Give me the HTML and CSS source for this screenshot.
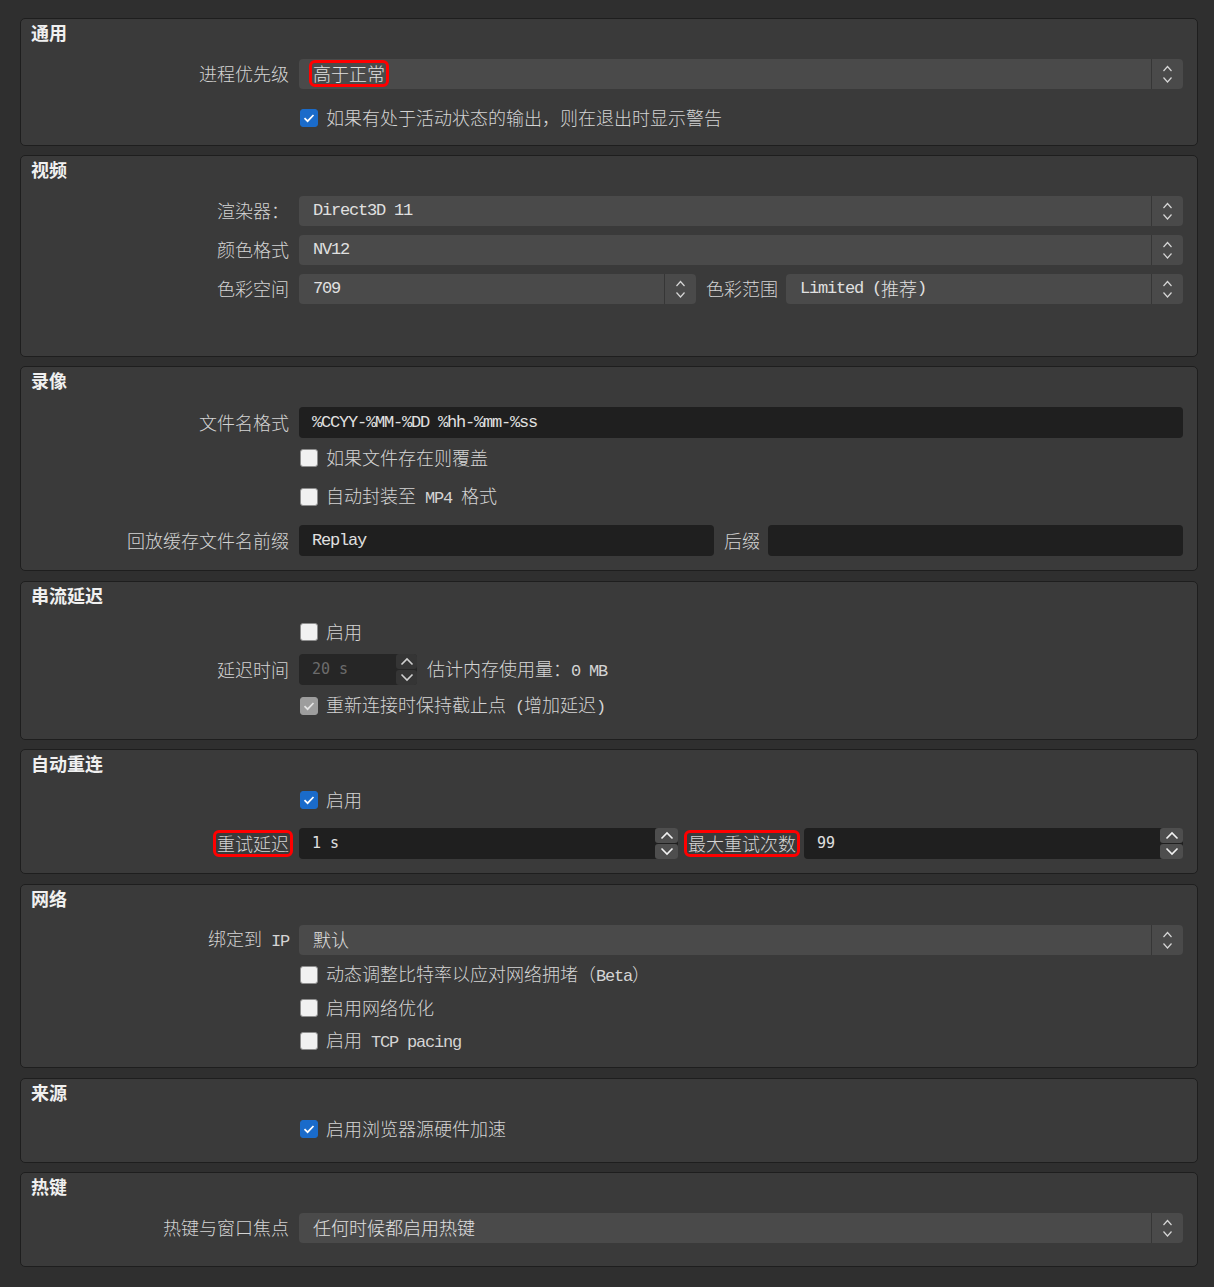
FILE: index.html
```html
<!DOCTYPE html>
<html lang="zh-CN">
<head>
  <meta charset="UTF-8">
  <meta name="viewport" content="width=device-width, initial-scale=1.0">
  <title>高级设置</title>
  <link rel="stylesheet" href="styles.css">
</head>
<body>
  <div class="settings">

    <!-- 通用 -->
    <section class="group pad-17">
      <div class="group-title">通用</div>
      <div class="row">
        <span class="row-label">进程优先级</span>
        <div class="combo">
          <span class="combo-value"><span class="mark">高于正常</span></span>
          <span class="combo-arrows"><svg width="11" height="20" viewBox="0 0 11 20"><path d="M1.5 7 5.5 2.5 9.5 7M1.5 13.5 5.5 18 9.5 13.5" fill="none" stroke="#d6d6d6" stroke-width="1.2"/></svg></span>
        </div>
      </div>
      <div class="row sp-19">
        <span class="row-label"></span>
        <span class="check on"><svg width="18" height="18" viewBox="0 0 18 18"><path d="M4.5 9.2 7.6 12.2 13.5 6" fill="none" stroke="#fff" stroke-width="1.7"/></svg></span>
        <span class="check-text">如果有处于活动状态的输出，则在退出时显示警告</span>
      </div>
    </section>

    <!-- 视频 -->
    <section class="group pad-52">
      <div class="group-title">视频</div>
      <div class="row">
        <span class="row-label">渲染器：</span>
        <div class="combo">
          <span class="combo-value"><span class="mono">Direct3D 11</span></span>
          <span class="combo-arrows"><svg width="11" height="20" viewBox="0 0 11 20"><path d="M1.5 7 5.5 2.5 9.5 7M1.5 13.5 5.5 18 9.5 13.5" fill="none" stroke="#d6d6d6" stroke-width="1.2"/></svg></span>
        </div>
      </div>
      <div class="row">
        <span class="row-label">颜色格式</span>
        <div class="combo">
          <span class="combo-value"><span class="mono">NV12</span></span>
          <span class="combo-arrows"><svg width="11" height="20" viewBox="0 0 11 20"><path d="M1.5 7 5.5 2.5 9.5 7M1.5 13.5 5.5 18 9.5 13.5" fill="none" stroke="#d6d6d6" stroke-width="1.2"/></svg></span>
        </div>
      </div>
      <div class="row">
        <span class="row-label">色彩空间</span>
        <div class="combo">
          <span class="combo-value"><span class="mono">709</span></span>
          <span class="combo-arrows"><svg width="11" height="20" viewBox="0 0 11 20"><path d="M1.5 7 5.5 2.5 9.5 7M1.5 13.5 5.5 18 9.5 13.5" fill="none" stroke="#d6d6d6" stroke-width="1.2"/></svg></span>
        </div>
        <span class="inline-label">色彩范围</span>
        <div class="combo">
          <span class="combo-value"><span class="mono">Limited (</span>推荐<span class="mono">)</span></span>
          <span class="combo-arrows"><svg width="11" height="20" viewBox="0 0 11 20"><path d="M1.5 7 5.5 2.5 9.5 7M1.5 13.5 5.5 18 9.5 13.5" fill="none" stroke="#d6d6d6" stroke-width="1.2"/></svg></span>
        </div>
      </div>
    </section>

    <!-- 录像 -->
    <section class="group pad-14">
      <div class="group-title">录像</div>
      <div class="row">
        <span class="row-label">文件名格式</span>
        <div class="field"><span class="mono">%CCYY-%MM-%DD %hh-%mm-%ss</span></div>
      </div>
      <div class="row sp-10">
        <span class="row-label"></span>
        <span class="check"></span>
        <span class="check-text">如果文件存在则覆盖</span>
      </div>
      <div class="row sp-19">
        <span class="row-label"></span>
        <span class="check"></span>
        <span class="check-text">自动封装至<span class="mono"> MP4 </span>格式</span>
      </div>
      <div class="row sp-18">
        <span class="row-label">回放缓存文件名前缀</span>
        <div class="field"><span class="mono">Replay</span></div>
        <span class="inline-label">后缀</span>
        <div class="field"></div>
      </div>
    </section>

    <!-- 串流延迟 -->
    <section class="group pad-23 wide-gap">
      <div class="group-title">串流延迟</div>
      <div class="row">
        <span class="row-label"></span>
        <span class="check"></span>
        <span class="check-text">启用</span>
      </div>
      <div class="row sp-12">
        <span class="row-label">延迟时间</span>
        <div class="spin small disabled">
          <div class="field"><span class="num">20 s</span></div>
          <div class="spin-buttons">
            <span class="spin-btn"><svg width="14" height="9" viewBox="0 0 14 9"><path d="M1.5 7.5 7 2 12.5 7.5" fill="none" stroke="#d0d0d0" stroke-width="1.6"/></svg></span>
            <span class="spin-btn"><svg width="14" height="9" viewBox="0 0 14 9"><path d="M1.5 1.5 7 7 12.5 1.5" fill="none" stroke="#d0d0d0" stroke-width="1.6"/></svg></span>
          </div>
        </div>
        <span class="note">估计内存使用量：<span class="mono">0 MB</span></span>
      </div>
      <div class="row sp-11">
        <span class="row-label"></span>
        <span class="check on disabled"><svg width="18" height="18" viewBox="0 0 18 18"><path d="M4.5 9.2 7.6 12.2 13.5 6" fill="none" stroke="#e4e4e4" stroke-width="1.7"/></svg></span>
        <span class="check-text">重新连接时保持截止点<span class="mono"> (</span>增加延迟<span class="mono">)</span></span>
      </div>
    </section>

    <!-- 自动重连 -->
    <section class="group pad-14">
      <div class="group-title">自动重连</div>
      <div class="row">
        <span class="row-label"></span>
        <span class="check on"><svg width="18" height="18" viewBox="0 0 18 18"><path d="M4.5 9.2 7.6 12.2 13.5 6" fill="none" stroke="#fff" stroke-width="1.7"/></svg></span>
        <span class="check-text">启用</span>
      </div>
      <div class="row sp-18">
        <span class="row-label"><span class="mark">重试延迟</span></span>
        <div class="spin">
          <div class="field"><span class="num">1 s</span></div>
          <div class="spin-buttons">
            <span class="spin-btn"><svg width="14" height="9" viewBox="0 0 14 9"><path d="M1.5 7.5 7 2 12.5 7.5" fill="none" stroke="#f2f2f2" stroke-width="1.6"/></svg></span>
            <span class="spin-btn"><svg width="14" height="9" viewBox="0 0 14 9"><path d="M1.5 1.5 7 7 12.5 1.5" fill="none" stroke="#f2f2f2" stroke-width="1.6"/></svg></span>
          </div>
        </div>
        <span class="inline-label"><span class="mark">最大重试次数</span></span>
        <div class="spin">
          <div class="field"><span class="num">99</span></div>
          <div class="spin-buttons">
            <span class="spin-btn"><svg width="14" height="9" viewBox="0 0 14 9"><path d="M1.5 7.5 7 2 12.5 7.5" fill="none" stroke="#f2f2f2" stroke-width="1.6"/></svg></span>
            <span class="spin-btn"><svg width="14" height="9" viewBox="0 0 14 9"><path d="M1.5 1.5 7 7 12.5 1.5" fill="none" stroke="#f2f2f2" stroke-width="1.6"/></svg></span>
          </div>
        </div>
      </div>
    </section>

    <!-- 网络 -->
    <section class="group pad-16 wide-gap">
      <div class="group-title">网络</div>
      <div class="row">
        <span class="row-label">绑定到<span class="mono"> IP</span></span>
        <div class="combo">
          <span class="combo-value">默认</span>
          <span class="combo-arrows"><svg width="11" height="20" viewBox="0 0 11 20"><path d="M1.5 7 5.5 2.5 9.5 7M1.5 13.5 5.5 18 9.5 13.5" fill="none" stroke="#d6d6d6" stroke-width="1.2"/></svg></span>
        </div>
      </div>
      <div class="row sp-10">
        <span class="row-label"></span>
        <span class="check"></span>
        <span class="check-text">动态调整比特率以应对网络拥堵（<span class="mono">Beta</span>）</span>
      </div>
      <div class="row sp-13">
        <span class="row-label"></span>
        <span class="check"></span>
        <span class="check-text">启用网络优化</span>
      </div>
      <div class="row sp-13">
        <span class="row-label"></span>
        <span class="check"></span>
        <span class="check-text">启用<span class="mono"> TCP pacing</span></span>
      </div>
    </section>

    <!-- 来源 -->
    <section class="group pad-23 wide-gap">
      <div class="group-title">来源</div>
      <div class="row">
        <span class="row-label"></span>
        <span class="check on"><svg width="18" height="18" viewBox="0 0 18 18"><path d="M4.5 9.2 7.6 12.2 13.5 6" fill="none" stroke="#fff" stroke-width="1.7"/></svg></span>
        <span class="check-text">启用浏览器源硬件加速</span>
      </div>
    </section>

    <!-- 热键 -->
    <section class="group pad-23">
      <div class="group-title">热键</div>
      <div class="row">
        <span class="row-label">热键与窗口焦点</span>
        <div class="combo">
          <span class="combo-value">任何时候都启用热键</span>
          <span class="combo-arrows"><svg width="11" height="20" viewBox="0 0 11 20"><path d="M1.5 7 5.5 2.5 9.5 7M1.5 13.5 5.5 18 9.5 13.5" fill="none" stroke="#d6d6d6" stroke-width="1.2"/></svg></span>
        </div>
      </div>
    </section>

  </div>
</body>
</html>
```

FILE: styles.css
```css
body {
  margin: 0;
  background: #2f2f2f;
  color: #d4d4d4;
  font-family: "Noto Sans CJK SC", "Noto Sans", sans-serif;
  font-size: 18px;
  font-weight: 300;
}

.settings {
  display: flex;
  flex-direction: column;
  gap: 9px;
  padding: 18px 16px 20px 20px;
}

/* group boxes */
.group {
  background: #3a3a3a;
  border: 1px solid #1e1e1e;
  border-radius: 5px;
  padding: 2px 14px 16px 10px;
}

.group.wide-gap { margin-top: 1px; }

.pad-14 { padding-bottom: 14px; }
.pad-16 { padding-bottom: 16px; }
.pad-17 { padding-bottom: 17px; }
.pad-23 { padding-bottom: 23px; }
.pad-52 { padding-bottom: 52px; }

.group-title {
  font-weight: 700;
  height: 22px;
  line-height: 22px;
  color: #f0f0f0;
  margin-bottom: 16px;
}

/* form rows */
.row {
  display: flex;
  align-items: center;
  height: 20px;
  margin-top: 9px;
}

.row:has(.combo) { height: 30px; }
.row:has(.field) { height: 31px; }

.group-title + .row { margin-top: 0; }

.sp-10 { margin-top: 10px; }
.sp-11 { margin-top: 11px; }
.sp-12 { margin-top: 12px; }
.sp-13 { margin-top: 13px; }
.sp-18 { margin-top: 18px; }
.sp-19 { margin-top: 19px; }

/* Noto CJK sits a little low in its line box; lift the text by 1px */
.row-label,
.inline-label,
.check-text,
.note,
.combo-value {
  padding-bottom: 2px;
}

.row-label {
  flex: none;
  width: 258px;
  margin-right: 10px;
  text-align: right;
  line-height: 20px;
  white-space: nowrap;
}

.inline-label {
  flex: none;
  margin: 0 8px 0 10px;
  line-height: 20px;
  white-space: nowrap;
}

.mono {
  font-family: "Liberation Mono", monospace;
  font-size: 17px;
  font-weight: 400;
  letter-spacing: -1.2px;
  line-height: 1;
}

.num {
  font-family: "DejaVu Sans Mono", monospace;
  font-size: 15px;
  font-weight: 400;
  line-height: 1;
}

/* red annotation boxes */
.mark {
  display: inline-block;
  line-height: 19px;
  outline: 3px solid #ff0000;
  outline-offset: 1px;
  border-radius: 2px;
}

/* combo boxes */
.combo {
  flex: 1;
  display: flex;
  height: 30px;
  background: #4a4a4a;
  border-radius: 4px;
  color: #e0e0e0;
}

.combo-value {
  flex: 1;
  display: flex;
  align-items: center;
  padding-left: 14px;
  white-space: nowrap;
}

.combo-arrows {
  flex: none;
  width: 31px;
  display: flex;
  align-items: center;
  justify-content: center;
  border-left: 1px solid #363636;
}

/* line edits */
.field {
  flex: 1;
  display: flex;
  align-items: center;
  height: 31px;
  padding-left: 13px;
  background: #1f1f1f;
  border-radius: 4px;
  color: #e0e0e0;
  white-space: nowrap;
}

/* spin boxes */
.spin {
  flex: 1;
  display: flex;
  height: 31px;
}

.spin .field {
  border-radius: 4px 0 0 4px;
}

.spin-buttons {
  flex: none;
  width: 23px;
  display: flex;
  flex-direction: column;
  gap: 1px;
  background: #1f1f1f;
  border-radius: 0 4px 4px 0;
}

.spin-btn {
  flex: 1;
  display: flex;
  align-items: center;
  justify-content: center;
  background: #4e4e4e;
  border-radius: 3px;
}

.spin.small {
  flex: none;
  width: 118px;
}

.spin.small .spin-buttons { width: 21px; }

.spin.disabled .field {
  background: #262626;
  color: #6c6c6c;
}

.spin.disabled .spin-buttons { background: #262626; }
.spin.disabled .spin-btn { background: #353535; }

.note {
  margin-left: 10px;
  line-height: 20px;
  white-space: nowrap;
}

/* checkboxes */
.check {
  flex: none;
  box-sizing: border-box;
  width: 18px;
  height: 18px;
  margin: 0 8px 0 1px;
  background: #f1f1f1;
  border: 1px solid #8e8e8e;
  border-radius: 3px;
  display: flex;
}

.check svg {
  margin: -1px;
}

.check.on {
  background: #1a6bca;
  border-color: #1a6bca;
}

.check.on.disabled {
  background: #9d9d9d;
  border-color: #9d9d9d;
}

.check-text {
  line-height: 20px;
  white-space: nowrap;
}
```
